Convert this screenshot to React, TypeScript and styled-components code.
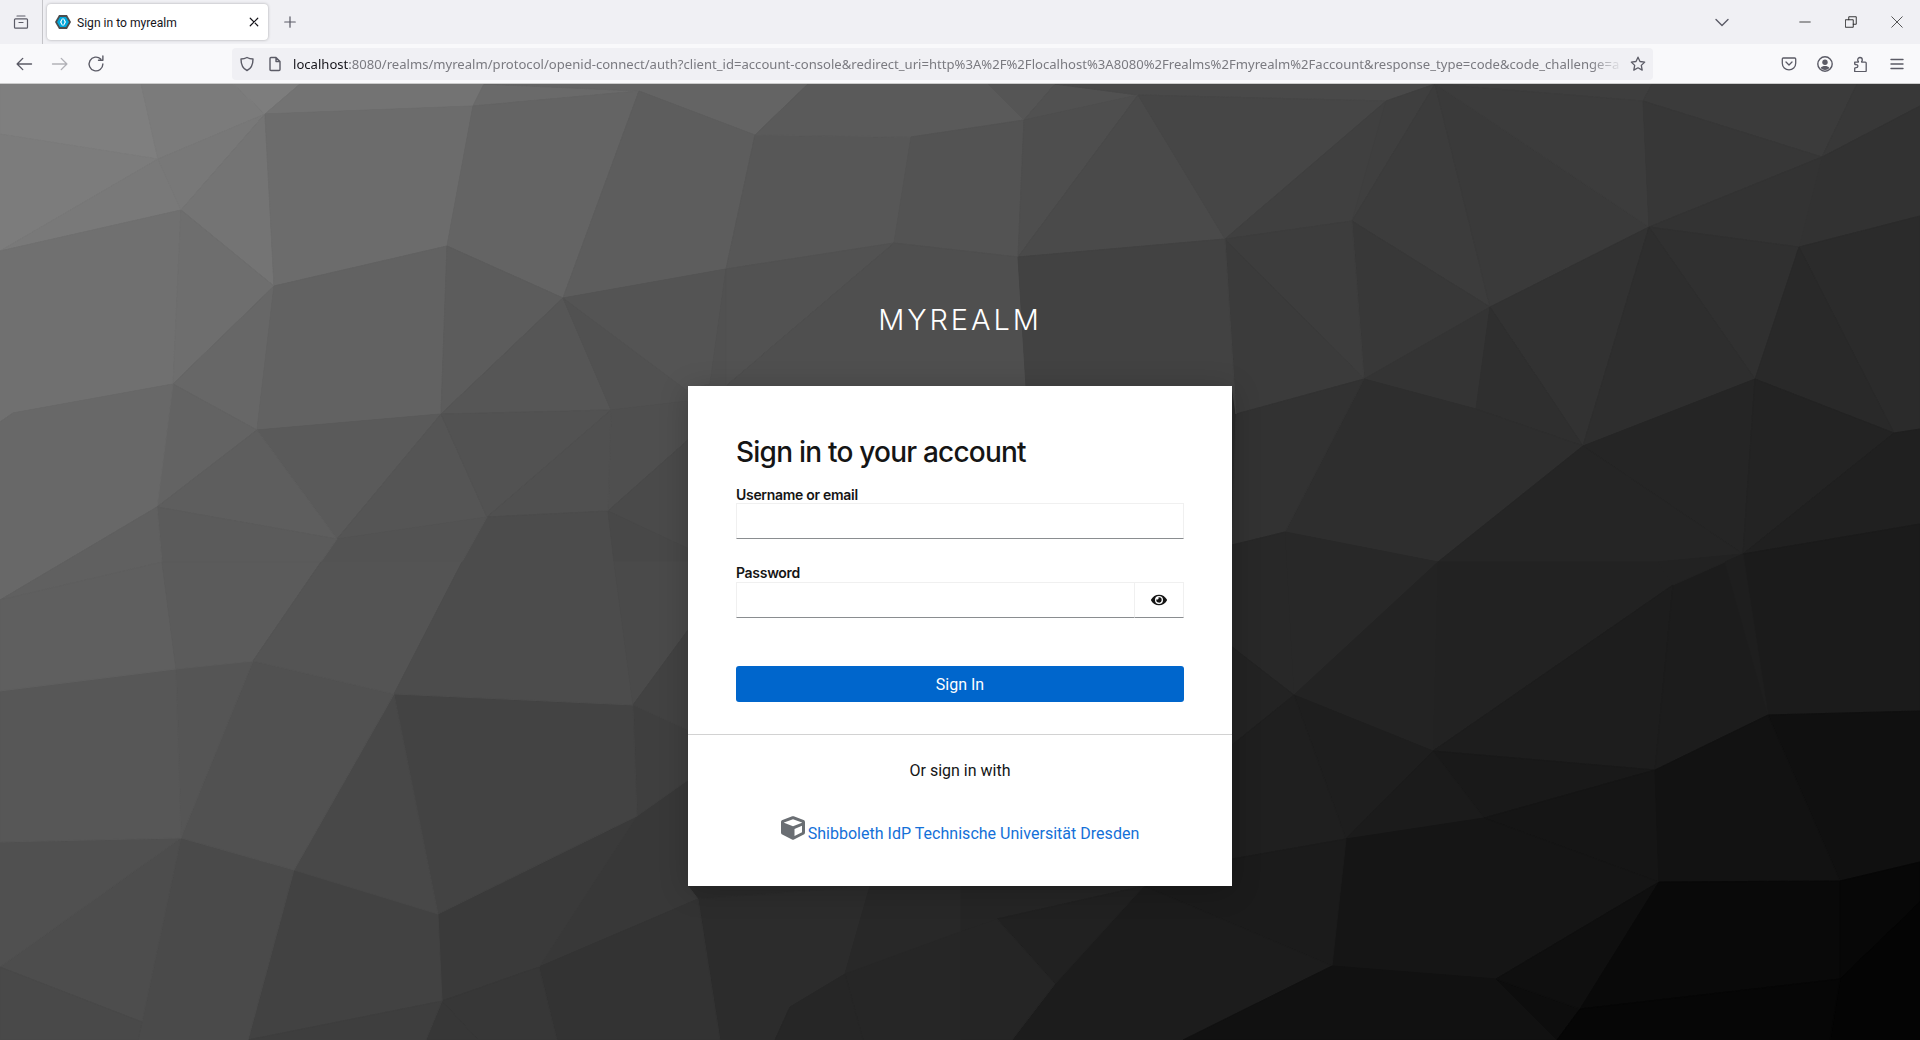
import { FC } from 'react'
import styled, { createGlobalStyle } from 'styled-components'
import { FaCube, FaEye } from 'react-icons/fa'

const GlobalStyle = createGlobalStyle`
  html, body, #root {
    margin: 0;
    height: 100%;
  }
  body {
    overflow: hidden;
    font-family: "Roboto", "Liberation Sans", sans-serif;
  }
  * {
    box-sizing: border-box;
  }
`

const Page = styled.div`
  display: flex;
  flex-direction: column;
  width: 1920px;
  height: 1040px;
`

const TabBar = styled.div`
  display: flex;
  align-items: center;
  height: 44px;
  background: #f0f0f4;
  flex-shrink: 0;
`

const ViewButton = styled.div`
  display: flex;
  align-items: center;
  justify-content: center;
  width: 43px;
  height: 44px;
  border-right: 1px solid #c4c4c8;
`

const Tab = styled.div`
  display: flex;
  align-items: center;
  width: 221px;
  height: 36px;
  margin-left: 4px;
  padding: 0 8px;
  background: #fff;
  border-radius: 4px;
  box-shadow: 0 0 3px rgba(0, 0, 0, 0.3);
`

const TabTitle = styled.span`
  flex: 1;
  margin-left: 6px;
  padding-top: 1px;
  font: 400 12.1px "Roboto", sans-serif;
  color: #15141a;
`

const NewTab = styled.div`
  display: flex;
  margin-left: 15px;
`

const TabBarEnd = styled.div`
  display: flex;
  align-items: center;
  margin-left: auto;
`

const ListTabs = styled.div`
  display: flex;
  margin-right: 52px;
`

const WindowButton = styled.div`
  display: flex;
  justify-content: center;
  width: 46px;
`

const NavBar = styled.div`
  display: flex;
  align-items: center;
  height: 40px;
  padding-left: 14px;
  background: #f9f9fb;
  border-bottom: 1px solid #ccc;
  flex-shrink: 0;
`

const NavButtons = styled.div`
  display: flex;
  gap: 16px;
  width: 218px;
`

const UrlBar = styled.div`
  display: flex;
  align-items: center;
  width: 1421px;
  height: 32px;
  padding: 0 7px;
  background: #f0f0f4;
  border-radius: 4px;
`

const UrlIcons = styled.div`
  display: flex;
  gap: 12px;
  margin-right: 10px;
  flex-shrink: 0;
`

const UrlText = styled.div`
  flex: 1;
  overflow: hidden;
  white-space: nowrap;
  padding-top: 1px;
  font: 400 13.1px "Noto Sans", sans-serif;
  color: #7a7a80;
  -webkit-mask-image: linear-gradient(to right, #000 97%, transparent 99.5%);
  mask-image: linear-gradient(to right, #000 97%, transparent 99.5%);
`

const UrlHost = styled.span`
  color: #15141a;
`

const ToolButtons = styled.div`
  display: flex;
  gap: 20px;
  margin-left: 128px;
`

const Main = styled.main`
  position: relative;
  flex: 1;
  display: flex;
  flex-direction: column;
  align-items: center;
  background: #2a2a2a;
  overflow: hidden;
`

const Backdrop = styled.svg`
  position: absolute;
  inset: 0;
  width: 100%;
  height: 100%;
`

const Realm = styled.h1`
  position: relative;
  margin: 216px 0 0;
  height: 86px;
  font: 300 29px/40px "Inter", sans-serif;
  letter-spacing: 2.9px;
  color: #fff;
`

const Card = styled.div`
  position: relative;
  width: 544px;
  height: 500px;
  background: #fff;
  box-shadow: 0 4px 28px rgba(0, 0, 0, 0.2);
`

const FormArea = styled.div`
  height: 349px;
  padding: 48px 48px 0;
  border-bottom: 1px solid #d2d2d2;
`

const Title = styled.h2`
  margin: 0;
  height: 38px;
  font: 500 28px/36px "Inter", sans-serif;
  letter-spacing: -0.78px;
  color: #151515;
`

const Field = styled.div<{ $gap: number }>`
  margin-top: ${({ $gap }) => $gap}px;
`

const Label = styled.label<{ $height: number }>`
  display: block;
  height: ${({ $height }) => $height}px;
  font: 600 14px/20px "Inter", sans-serif;
  letter-spacing: -0.3px;
  color: #151515;
`

const InputRow = styled.div`
  display: flex;
  height: 36px;
`

const Input = styled.input`
  flex: 1;
  min-width: 0;
  height: 36px;
  border: 1px solid #f0f0f0;
  border-bottom-color: #8a8d90;
  border-radius: 0;
  outline: none;
  background: #fff;
`

const EyeButton = styled.div`
  display: flex;
  align-items: center;
  justify-content: center;
  width: 50px;
  height: 36px;
  border: 1px solid #f0f0f0;
  border-bottom-color: #8a8d90;
  color: #151515;
  font-size: 16px;
  margin-left: -1px;
`

const SignIn = styled.button`
  display: block;
  width: 100%;
  height: 36px;
  margin-top: 48px;
  border: none;
  border-radius: 3px;
  background: #06c;
  color: #fff;
  font: 400 16px "Roboto", sans-serif;
`

const Social = styled.div`
  display: flex;
  flex-direction: column;
  align-items: center;
  padding-top: 24px;
`

const SocialTitle = styled.div`
  height: 24px;
  font: 400 16px/24px "Roboto", sans-serif;
  color: #151515;
`

const SocialLink = styled.a`
  display: flex;
  align-items: flex-end;
  gap: 3px;
  margin-top: 33px;
  font: 400 16px/20px "Roboto", sans-serif;
  letter-spacing: 0.02px;
  color: #1470d8;
  text-decoration: none;
`

const CubeIcon = styled(FaCube)`
  width: 24px;
  height: 24px;
  margin-bottom: 4px;
  color: #6a6e73;
`

type IconProps = { size?: number; color?: string; width?: number }

const Line: FC<IconProps & { d: string }> = ({ d, size = 16, color = '#5b5b66', width = 1.4 }) => (
  <svg width={size} height={size} viewBox="0 0 16 16" fill="none" stroke={color} strokeWidth={width} strokeLinecap="round" strokeLinejoin="round">
    <path d={d} />
  </svg>
)

const KeycloakIcon = () => (
  <svg width="16" height="16" viewBox="0 0 16 16">
    <path d="M4 1h8l4 7-4 7H4L0 8z" fill="#4d4d4d" />
    <path d="M5 3h6l3 5-3 5H5L2 8z" fill="#00a7dc" />
    <path d="M7 4.500 5 8l2 3.500h1L6.400 8 8 4.500zM9 4.500H8L9.600 8 8 11.500h1L11 8z" fill="#fff" />
  </svg>
)

const PocketIcon = () => (
  <svg width="16" height="16" viewBox="0 0 16 16" fill="none" stroke="#5b5b66" strokeWidth="1.3" strokeLinecap="round" strokeLinejoin="round">
    <path d="M2.300 2h11.400c.6 0 1 .4 1 1v4.200a6.700 6.700 0 0 1-13.400 0V3c0-.6.4-1 1-1z" />
    <path d="M5 6l3 3 3-3" />
  </svg>
)

const AccountIcon = () => (
  <svg width="16" height="16" viewBox="0 0 16 16">
    <circle cx="8" cy="8" r="7.200" fill="none" stroke="#5b5b66" strokeWidth="1.400" />
    <circle cx="8" cy="6.200" r="2.700" fill="#5b5b66" />
    <path d="M3.600 12.100c.9-1.400 2.600-2 4.400-2s3.500.6 4.400 2A5.800 5.800 0 0 1 8 14a5.800 5.800 0 0 1-4.400-1.900z" fill="#5b5b66" />
  </svg>
)

const ExtensionIcon = () => (
  <Line size={16} width={1.3} d="M1.700 6.200h3.200c.5 0 .6-.4.4-.8-.3-.4-.6-.8-.6-1.500C4.700 2.600 5.700 1.500 7 1.500s2.300 1.100 2.300 2.400c0 .7-.3 1.100-.6 1.500-.2.400-.1.800.4.800h3.200c.6 0 .9.400.9.900v7.600c0 .5-.3.900-.9.900H1.700v-3.400c.3-.4.900-.6 1.500-.6 1 0 1.700-.7 1.700-1.600S4.200 8.600 3.200 8.600c-.6 0-1.200-.2-1.500-.6z" />
)

const StarIcon = () => (
  <Line size={16} width={1.3} d="M8 1.200l2 4.300 4.700.6-3.400 3.300.9 4.700L8 11.800l-4.200 2.300.9-4.700L1.300 6.100 6 5.500z" />
)

const polys: [number, string][] = [
  [0x85, '0,84 141,84 158,159 0,134'],
  [0x7e, '141,84 233,84 265,114 158,159'],
  [0x88, '233,84 300,84 265,114'],
  [0x74, '300,84 484,84 473,106 265,114'],
  [0x6e, '484,84 639,91 473,106'],
  [0x6a, '484,84 808,84 755,135 639,91'],
  [0x80, '0,134 158,159 0,251'],
  [0x7c, '158,159 181,210 0,251'],
  [0x78, '158,159 265,114 181,210'],
  [0x74, '265,114 274,286 181,210'],
  [0x69, '265,114 473,106 447,246 274,286'],
  [0x67, '473,106 639,91 563,298 447,246'],
  [0x5f, '639,91 755,135 726,269 563,298'],
  [0x57, '755,135 911,137 894,243 726,269'],
  [0x60, '808,84 988,84 1024,120 911,137 755,135'],
  [0x53, '911,137 1024,120 1018,257 894,243'],
  [0x5c, '988,84 1055,84 1024,120'],
  [0x54, '1055,84 1138,95 1024,120'],
  [0x4e, '1055,84 1435,84 1386,101 1138,95'],
  [0x4b, '1024,120 1138,95 1018,257'],
  [0x49, '1138,95 1225,239 1018,257'],
  [0x47, '1138,95 1386,101 1225,239'],
  [0x40, '1386,101 1352,221 1225,239'],
  [0x3e, '1386,101 1435,84 1352,221'],
  [0x3b, '1435,84 1490,307 1352,221'],
  [0x3d, '1435,84 1649,227 1490,307'],
  [0x42, '1435,84 1652,84 1643,101'],
  [0x40, '1435,84 1643,101 1649,227'],
  [0x43, '1652,84 1857,84 1822,157 1643,101'],
  [0x38, '1643,101 1822,157 1649,227'],
  [0x3c, '1857,84 1920,84 1920,106 1822,157'],
  [0x2f, '1920,106 1920,216 1799,247 1822,157'],
  [0x31, '1822,157 1799,247 1649,227'],
  [0x30, '1649,227 1799,247 1755,379'],
  [0x32, '1649,227 1583,446 1490,307'],
  [0x2e, '1649,227 1755,379 1583,446'],
  [0x2c, '1799,247 1920,216 1920,429 1894,433'],
  [0x27, '1799,247 1894,433 1755,379'],
  [0x38, '1352,221 1490,307 1364,379'],
  [0x3d, '1225,239 1352,221 1364,379'],
  [0x3b, '1225,239 1364,379 1236,414'],
  [0x33, '1364,379 1490,307 1476,409'],
  [0x2d, '1490,307 1583,446 1476,409'],
  [0x2d, '1364,379 1476,409 1583,446 1438,562 1285,532'],
  [0x32, '1236,414 1364,379 1285,532 1232,545'],
  [0x22, '1583,446 1755,379 1743,554'],
  [0x26, '1583,446 1743,554 1658,562 1438,562'],
  [0x20, '1755,379 1894,433 1743,554'],
  [0x1c, '1894,433 1920,429 1920,524 1743,554'],
  [0x29, '1285,532 1438,562 1294,695'],
  [0x2a, '1285,532 1294,695 1232,647 1232,545'],
  [0x22, '1438,562 1658,562 1673,585 1433,751'],
  [0x25, '1294,695 1438,562 1433,751'],
  [0x1e, '1673,585 1655,770 1433,751'],
  [0x19, '1433,751 1655,770 1484,818'],
  [0x1d, '1294,695 1433,751 1346,839'],
  [0x24, '1232,647 1294,695 1232,745'],
  [0x1f, '1232,745 1294,695 1346,839 1232,859'],
  [0x1c, '1433,751 1484,818 1346,839'],
  [0x15, '1655,770 1659,882 1484,818'],
  [0x1b, '1673,585 1725,562 1768,715 1655,770'],
  [0x24, '1658,562 1743,554 1725,562 1673,585'],
  [0x18, '1743,554 1920,524 1920,711 1768,715'],
  [0x1f, '1743,554 1768,715 1725,562'],
  [0x10, '1768,715 1920,711 1920,862 1840,881'],
  [0x12, '1655,770 1768,715 1840,881 1659,882'],
  [0x13, '1346,839 1484,818 1659,882 1496,979 1332,966'],
  [0x19, '1232,859 1346,839 1332,966 1144,886'],
  [0x17, '1144,886 1332,966 1183,1040 1012,1040 1055,984'],
  [0x0c, '1332,966 1496,979 1557,1040 1183,1040'],
  [0x0a, '1496,979 1580,1009 1557,1040'],
  [0x0e, '1496,979 1659,882 1580,1009'],
  [0x06, '1659,882 1840,881 1840,979 1580,1009'],
  [0x04, '1840,881 1920,862 1920,902 1840,979'],
  [0x00, '1840,979 1920,902 1920,1040 1830,1040'],
  [0x01, '1580,1009 1840,979 1830,1040 1557,1040'],
  [0x28, '960,886 1144,886 997,919 960,932'],
  [0x1f, '997,919 1144,886 1055,984'],
  [0x26, '960,932 997,919 1055,984 1012,1040 960,1040'],
  [0x2d, '698,899 870,886 845,974 790,1007 775,1040 720,1040'],
  [0x2a, '870,886 960,886 960,932 845,974'],
  [0x25, '845,974 960,932 960,1040 863,1040'],
  [0x20, '790,1007 845,974 863,1040 775,1040'],
  [0x38, '637,816 688,780 688,886 698,899 539,967'],
  [0x3e, '633,705 688,730 688,780 637,816'],
  [0x30, '539,967 698,899 720,1040 557,1040'],
  [0x39, '438,914 637,816 539,967 442,1001'],
  [0x44, '394,694 633,705 637,816 438,914'],
  [0x35, '442,1001 539,967 557,1040 478,1040'],
  [0x30, '442,1001 478,1040 426,1040'],
  [0x44, '294,870 438,914 442,1001 248,1040'],
  [0x3e, '248,1040 442,1001 426,1040'],
  [0x4a, '181,838 294,870 248,1040 138,1040 142,1022'],
  [0x4e, '181,838 142,1022 0,967'],
  [0x50, '0,842 181,838 0,967'],
  [0x45, '142,1022 138,1040 0,1040 0,967'],
  [0x4a, '394,694 438,914 294,870'],
  [0x52, '253,661 394,694 294,870 181,838'],
  [0x52, '176,669 253,661 181,838'],
  [0x58, '0,691 176,669 181,838 0,842'],
  [0x70, '0,251 181,210 173,384 13,413 0,422'],
  [0x6e, '181,210 274,286 173,384'],
  [0x68, '274,286 257,430 173,384'],
  [0x62, '274,286 447,246 441,414 257,430'],
  [0x5d, '447,246 563,298 441,414'],
  [0x59, '563,298 611,410 441,414'],
  [0x55, '563,298 726,269 710,384 686,390'],
  [0x50, '563,298 686,390 710,384 688,401 611,410'],
  [0x50, '726,269 894,243 726,386'],
  [0x50, '726,269 726,386 688,401 710,384'],
  [0x4a, '894,243 1018,257 1026,386 726,386'],
  [0x42, '1018,257 1225,239 1236,414 1232,386 1026,386'],
  [0x64, '173,384 257,430 157,507'],
  [0x6c, '13,413 173,384 157,507 0,600 0,422'],
  [0x59, '257,430 441,414 337,539'],
  [0x5e, '157,507 257,430 337,539'],
  [0x55, '441,414 487,517 337,539'],
  [0x50, '441,414 611,410 487,517'],
  [0x4e, '611,410 688,401 688,440 608,511'],
  [0x44, '608,511 688,440 688,549'],
  [0x52, '487,517 611,410 608,511'],
  [0x47, '487,517 608,511 614,562 462,562'],
  [0x42, '608,511 689,549 688,562 614,562'],
  [0x4f, '337,539 487,517 462,562 321,562'],
  [0x5a, '157,507 337,539 321,562 162,562'],
  [0x60, '0,600 157,507 162,562'],
  [0x62, '0,600 162,562 176,669 0,691'],
  [0x5c, '162,562 321,562 253,661 176,669'],
  [0x53, '321,562 462,562 394,694 253,661'],
  [0x4f, '462,562 614,562 633,705 394,694'],
  [0x4d, '614,562 688,562 688,630 633,705'],
  [0x3e, '633,705 688,630 688,730'],
]

const centroid = (points: string) => {
  const pairs = points.split(' ').map(p => p.split(',').map(Number))
  return [
    pairs.reduce((s, p) => s + p[0], 0) / pairs.length,
    pairs.reduce((s, p) => s + p[1], 0) / pairs.length,
  ]
}

// my hand-picked greys are too contrasty, pull each one toward its neighbourhood
const centers = polys.map(([, points]) => centroid(points))
const facets = polys.map(([gray, points], i) => {
  let sum = 0
  let weight = 0
  polys.forEach(([other], j) => {
    const dx = centers[i][0] - centers[j][0]
    const dy = centers[i][1] - centers[j][1]
    const w = Math.exp(-(dx * dx + dy * dy) / (2 * 130 * 130))
    sum += other * w
    weight += w
  })
  const v = Math.round(gray * 0.3 + (sum / weight) * 0.7)
  return { points, fill: `rgb(${v},${v},${v})` }
})

const App = () => (
  <Page>
    <GlobalStyle />
    <TabBar>
      <ViewButton>
        <Line width={1.2} d="M4 2h8M2.500 4.800h11c.6 0 1 .4 1 1v7.400c0 .6-.4 1-1 1h-11c-.6 0-1-.4-1-1V5.800c0-.6.4-1 1-1zM6 8.500h4" />
      </ViewButton>
      <Tab>
        <KeycloakIcon />
        <TabTitle>Sign in to myrealm</TabTitle>
        <Line size={12} color="#15141a" width={1.6} d="M3 3l10 10M13 3L3 13" />
      </Tab>
      <NewTab>
        <Line size={14} d="M8 2v12M2 8h12" />
      </NewTab>
      <TabBarEnd>
        <ListTabs>
          <Line d="M2 5.500l6 6 6-6" />
        </ListTabs>
        <WindowButton>
          <Line size={12} color="#222" width={1.1} d="M1 8h14" />
        </WindowButton>
        <WindowButton>
          <Line size={12} color="#222" width={1.2} d="M1 5h10v10H1zM5 5V1h10v10h-4" />
        </WindowButton>
        <WindowButton>
          <Line size={12} color="#222" width={1} d="M1 1l14 14M15 1L1 15" />
        </WindowButton>
      </TabBarEnd>
    </TabBar>
    <NavBar>
      <NavButtons>
        <Line size={20} d="M2.500 8h11.500M7 3.500 2.500 8 7 12.500" width={1.100} />
        <Line size={20} color="#b2b2b8" d="M2 8h11.500M9 3.500 13.500 8 9 12.500" width={1.100} />
        <Line size={20} d="M13.500 8a5.500 5.500 0 1 1-1.700-4M13.500 1.500v3.500H10" width={1.100} />
      </NavButtons>
      <UrlBar>
        <UrlIcons>
          <Line d="M8 1.500c1.800 1 3.800 1.500 6 1.500 0 5.500-1.500 9.500-6 11.500C3.500 12.500 2 8.500 2 3c2.200 0 4.200-.5 6-1.500z" />
          <Line d="M3 2.500c0-.6.400-1 1-1h5l4 4v8c0 .6-.4 1-1 1H4c-.6 0-1-.4-1-1zM9 1.500v4h4" />
        </UrlIcons>
        <UrlText>
          <UrlHost>localhost</UrlHost>
          :8080/realms/myrealm/protocol/openid-connect/auth?client_id=account-console&amp;redirect_uri=http%3A%2F%2Flocalhost%3A8080%2Frealms%2Fmyrealm%2Faccount&amp;response_type=code&amp;code_challenge=a
        </UrlText>
        <StarIcon />
      </UrlBar>
      <ToolButtons>
        <PocketIcon />
        <AccountIcon />
        <ExtensionIcon />
        <Line d="M2 3.500h12M2 8h12M2 12.500h12" />
      </ToolButtons>
    </NavBar>
    <Main>
      <Backdrop viewBox="0 84 1920 956" preserveAspectRatio="none">
        {facets.map(({ points, fill }) => (
          <polygon key={points} points={points} fill={fill} stroke={fill} strokeWidth="1" />
        ))}
      </Backdrop>
      <Realm>MYREALM</Realm>
      <Card>
        <FormArea>
          <Title>Sign in to your account</Title>
          <Field $gap={13}>
            <Label $height={18}>Username or email</Label>
            <InputRow>
              <Input />
            </InputRow>
          </Field>
          <Field $gap={24}>
            <Label $height={19}>Password</Label>
            <InputRow>
              <Input />
              <EyeButton>
                <FaEye />
              </EyeButton>
            </InputRow>
          </Field>
          <SignIn>Sign In</SignIn>
        </FormArea>
        <Social>
          <SocialTitle>Or sign in with</SocialTitle>
          <SocialLink href="#">
            <CubeIcon />
            Shibboleth IdP Technische Universität Dresden
          </SocialLink>
        </Social>
      </Card>
    </Main>
  </Page>
)

export default App
